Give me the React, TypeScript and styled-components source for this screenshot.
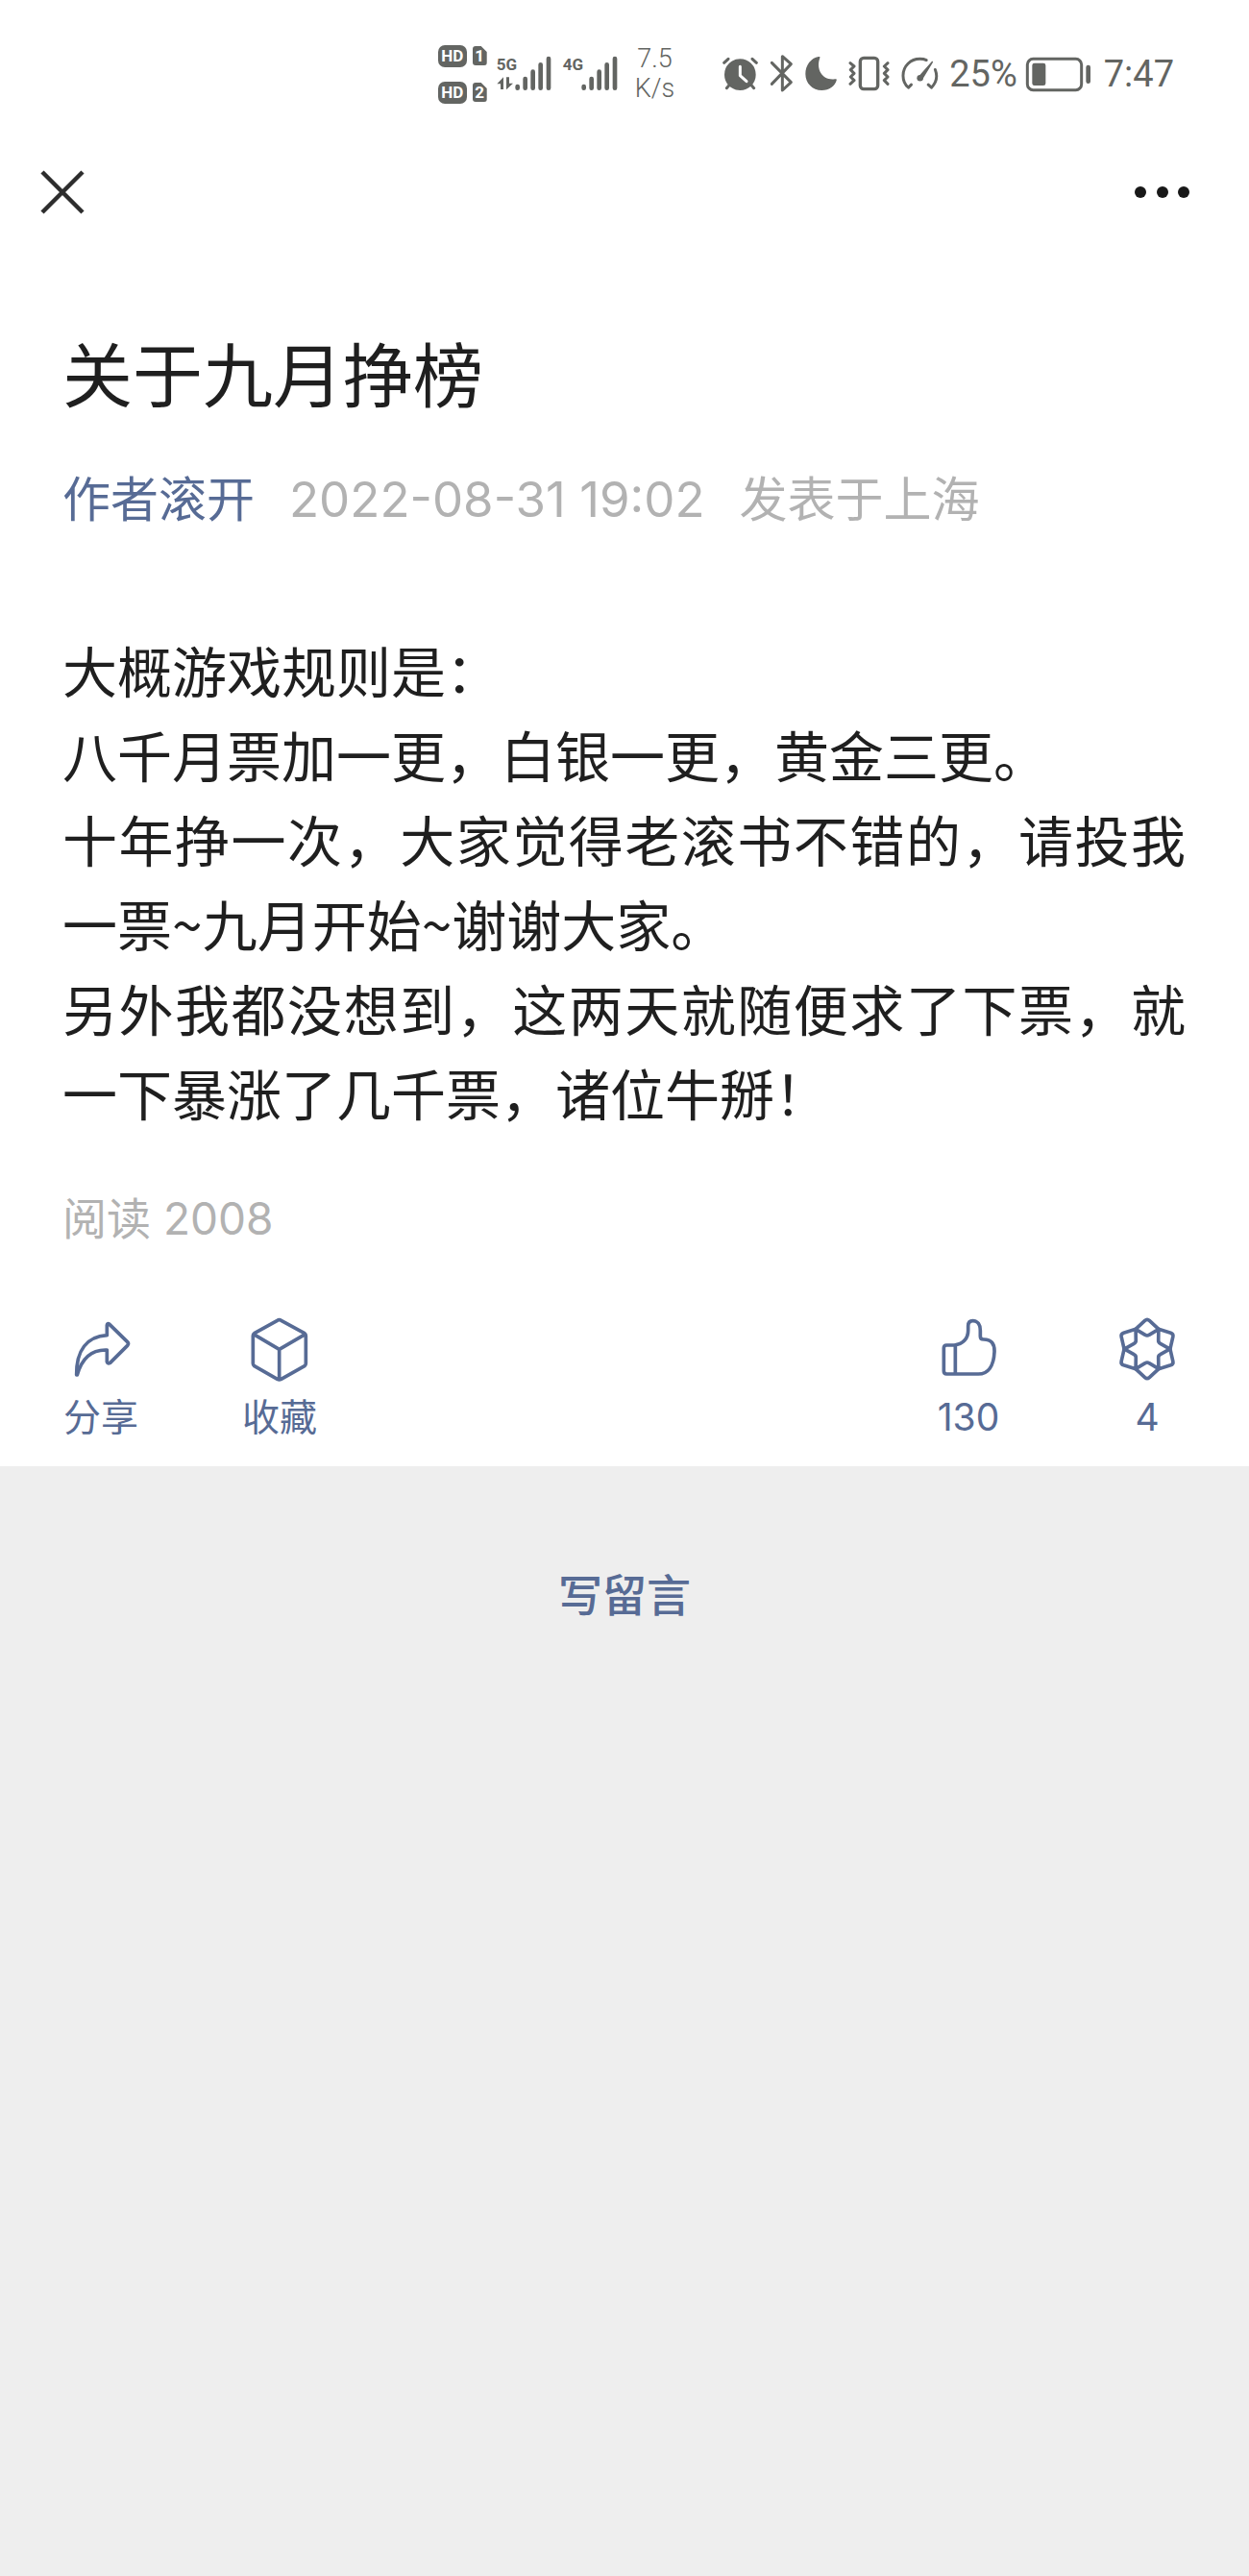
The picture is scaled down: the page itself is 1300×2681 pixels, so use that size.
import React from "react";
import styled, { createGlobalStyle } from "styled-components";

const ink = "#1f1f1f";
const link = "#576b95";
const muted = "#b2b2b2";
const status = "#636562";

const GlobalStyle = createGlobalStyle`
  * { box-sizing: border-box; }
  body {
    margin: 0;
    background: #eeeeee;
    font-family: Inter, "Noto Sans CJK SC", sans-serif;
    color: ${ink};
  }
  h1, p { margin: 0; }
  button {
    padding: 0;
    border: 0;
    background: none;
    font: inherit;
    color: inherit;
    cursor: pointer;
  }
  svg { display: block; flex: none; }
`;

const Sheet = styled.div`
  background: #ffffff;
`;

const StatusBar = styled.header`
  display: flex;
  align-items: center;
  justify-content: flex-end;
  height: 154px;
  padding-right: 78px;
  color: ${status};
  font-family: Roboto, sans-serif;
`;

const Cluster = styled.div<{ $gap: number; $after: number }>`
  display: flex;
  align-items: center;
  gap: ${(p) => p.$gap}px;
  margin-right: ${(p) => p.$after}px;
`;

const SimList = styled.div`
  display: flex;
  flex-direction: column;
  gap: 15px;
`;

const SimRow = styled.div`
  display: flex;
  align-items: center;
  gap: 6px;
`;

const Badge = styled.span<{ $sim?: boolean }>`
  display: flex;
  align-items: center;
  justify-content: center;
  width: ${(p) => (p.$sim ? 15 : 30)}px;
  height: ${(p) => (p.$sim ? 20 : 23)}px;
  border-radius: ${(p) => (p.$sim ? 3 : 7)}px;
  clip-path: ${(p) => (p.$sim ? "polygon(0 0, 60% 0, 100% 30%, 100% 100%, 0 100%)" : "none")};
  background: ${status};
  color: #ffffff;
  font-size: 17px;
  line-height: 20px;
  font-weight: 700;
`;

const Network = styled.div`
  display: flex;
`;

const NetworkType = styled.div`
  display: flex;
  flex-direction: column;
  justify-content: space-between;
  width: 19px;
  height: 40px;
  padding: 1px 0 3px;
  font-size: 17px;
  line-height: 18px;
  font-weight: 700;
`;

const Speed = styled.div`
  font-size: 27px;
  line-height: 31px;
  font-weight: 300;
  text-align: center;
`;

const StatusText = styled.span`
  font-size: 38px;
  line-height: 40px;
`;

const NavBar = styled.nav`
  display: flex;
  align-items: center;
  justify-content: space-between;
  height: 92px;
  padding: 0 55px 0 36px;
`;

const Article = styled.article`
  padding: 92px 66px 0 65px;
`;

const Title = styled.h1`
  font-size: 73px;
  line-height: 108px;
  font-weight: 400;
`;

const Meta = styled.div`
  display: flex;
  flex-wrap: wrap;
  gap: 36px;
  margin-top: 34px;
  color: ${muted};
  font-size: 50px;
  line-height: 80px;
`;

const AuthorLink = styled.a`
  color: ${link};
  text-decoration: none;
`;

const PublishTime = styled.time`
  font-size: 51px;
`;

const Content = styled.div`
  margin-top: 92px;
  font-family: "Noto Sans CJK SC", sans-serif;
  font-size: 57px;
  line-height: 88px;
  text-align: justify;
`;

const ReadCount = styled.p`
  margin-top: 48px;
  color: ${muted};
  font-size: 46px;
  line-height: 80px;
`;

const Actions = styled.div`
  display: flex;
  justify-content: space-between;
  margin-top: 56px;
  padding-bottom: 20px;
`;

const ActionGroup = styled.div`
  display: flex;
  gap: 106px;
`;

const Action = styled.button`
  display: flex;
  flex-direction: column;
  align-items: center;
  width: 80px;
  color: ${link};
  font-size: 39px;
  line-height: 62px;
`;

const Comments = styled.footer`
  display: flex;
  justify-content: center;
  padding: 94px 66px;
`;

const CommentButton = styled.button`
  color: ${link};
  font-size: 46px;
  line-height: 80px;
  font-weight: 500;
`;

const Stroked = styled.svg<{ $w: number }>`
  fill: none;
  stroke: currentColor;
  stroke-width: ${(p) => p.$w}px;
  stroke-linecap: round;
  stroke-linejoin: round;
`;

const SignalBars = () => (
  <Stroked $w={14} width="40" height="40" viewBox="285 78 120 120" aria-hidden>
    <path d="M293 177V182M317 153V182M341 131V182M365 109V182M390 90V182" />
  </Stroked>
);

const DataArrows = () => (
  <svg width="18" height="14" viewBox="228 150 54 42" fill="currentColor" aria-hidden>
    <path d="M249 151V189H240V172H229ZM258 151H267V170H279L258 190Z" />
  </svg>
);

const AlarmIcon = () => (
  <Stroked $w={9} width="37" height="40" viewBox="66 78 111 120" aria-hidden>
    <circle cx="121" cy="140" r="49" fill="currentColor" stroke="none" />
    <path d="M71 103L84 91M159 91L172 103M88 172L79 182M155 172L164 182" />
    <path d="M121 115V143L141 161" stroke="#ffffff" />
  </Stroked>
);

const BluetoothIcon = () => (
  <Stroked $w={9} width="25" height="40" viewBox="212 78 75 120" aria-hidden>
    <path d="M219 103L279 164L252 189V83L279 107L219 169" />
  </Stroked>
);

const MoonIcon = () => (
  <svg width="33" height="40" viewBox="324 78 99 120" fill="currentColor" aria-hidden>
    <path d="M366 84C342 88 325 111 325 138C325 167 347 189 376 189C400 189 417 175 422 158C423 154 421 153 417 154C381 160 356 126 370 88C371 85 370 83 366 84Z" />
  </svg>
);

const VibrateIcon = () => (
  <Stroked $w={9} width="43" height="40" viewBox="460 78 129 120" aria-hidden>
    <rect x="497" y="88" width="55" height="97" rx="11" strokeWidth="10" />
    <path d="M466 104L478 114L467 125L478 136L467 147L478 158L466 169" />
    <path d="M583 104L572 114L583 125L572 136L583 147L572 158L583 169" />
  </Stroked>
);

const GaugeIcon = () => (
  <Stroked $w={9} width="39" height="40" viewBox="625 78 119 120" aria-hidden>
    <path d="M657 172L648 181C637 172 631 158 631 143C631 113 655 90 684 90C692 90 699 91 705 94" />
    <path d="M733 124C741 145 736 166 721 181L711 172" />
    <circle cx="685" cy="151" r="10" fill="currentColor" stroke="none" />
    <path d="M681 145L722 98C725 97 727 99 725 102L692 156Z" fill="currentColor" stroke="none" />
  </Stroked>
);

const BatteryIcon = () => (
  <svg width="69" height="40" viewBox="260 78 207 120" fill="currentColor" role="img" aria-label="电量 25%">
    <rect x="267" y="91" width="169" height="97" rx="18" fill="none" stroke="currentColor" strokeWidth="9" />
    <rect x="282" y="104" width="42" height="70" rx="7" />
    <rect x="450" y="110" width="14" height="58" rx="7" />
  </svg>
);

const CloseIcon = () => (
  <svg width="58" height="58" viewBox="0 0 58 58" fill="none" stroke="#2d2d2d" strokeWidth="4.5" aria-hidden>
    <path d="M8 8L50 50M50 8L8 50" />
  </svg>
);

const MoreIcon = () => (
  <svg width="70" height="40" viewBox="0 0 70 40" fill="#181818" aria-hidden>
    <circle cx="12" cy="20" r="6" />
    <circle cx="35" cy="20" r="6" />
    <circle cx="57" cy="20" r="6" />
  </svg>
);

const ShareIcon = () => (
  <Stroked $w={11} width="80" height="80" viewBox="78 39 240 240" aria-hidden>
    <path d="M122 240C121 164 154 120 217 116V85Q218 77 225 82L281 137Q286 142 281 148L227 202Q219 206 217 199V162C172 160 140 184 124 240Z" />
  </Stroked>
);

const CubeIcon = () => (
  <Stroked $w={11} width="80" height="80" viewBox="636 39 240 240" aria-hidden>
    <path d="M749 70Q755 66 761 70L834 110Q838 113 838 118V204Q838 209 834 212L761 253Q755 256 749 253L677 212Q673 209 673 204V118Q673 113 677 110ZM675 113L755 160L836 113M755 160V253" />
  </Stroked>
);

const ThumbIcon = () => (
  <Stroked $w={11} width="80" height="80" viewBox="84 39 240 240" aria-hidden>
    <path d="M136 147H160C187 144 203 126 203 101V87Q203 71 218 71C233 71 241 83 241 101V119Q241 129 252 129C275 129 286 142 285 168C283 213 265 237 235 237H136Q127 237 127 228V156Q127 147 136 147ZM163 148V236" />
  </Stroked>
);

const StarIcon = () => (
  <Stroked $w={11} width="80" height="80" viewBox="642 39 240 240" aria-hidden>
    {[0, 60, 120, 180, 240, 300].map((angle) => (
      <path
        key={angle}
        transform={`rotate(${angle} 762 159)`}
        d="M726 97L755 70Q762 64 769 70L798 97L768 115Q762 119 756 115Z"
      />
    ))}
  </Stroked>
);

const paragraphs = [
  "大概游戏规则是：",
  "八千月票加一更，白银一更，黄金三更。",
  "十年挣一次，大家觉得老滚书不错的，请投我一票~九月开始~谢谢大家。",
  "另外我都没想到，这两天就随便求了下票，就一下暴涨了几千票，诸位牛掰！",
];

export default function App() {
  return (
    <div lang="zh-CN">
      <GlobalStyle />
      <Sheet>
        <StatusBar>
          <Cluster $gap={10} $after={16}>
            <SimList>
              {[1, 2].map((sim) => (
                <SimRow key={sim}>
                  <Badge>HD</Badge>
                  <Badge $sim>{sim}</Badge>
                </SimRow>
              ))}
            </SimList>
            <Network>
              <NetworkType>
                5G
                <DataArrows />
              </NetworkType>
              <SignalBars />
            </Network>
            <Network>
              <NetworkType>4G</NetworkType>
              <SignalBars />
            </Network>
          </Cluster>
          <Cluster $gap={0} $after={50}>
            <Speed>
              7.5
              <br />
              K/s
            </Speed>
          </Cluster>
          <Cluster $gap={12} $after={11}>
            <AlarmIcon />
            <BluetoothIcon />
            <MoonIcon />
            <VibrateIcon />
            <GaugeIcon />
          </Cluster>
          <Cluster $gap={8} $after={13}>
            <StatusText>25%</StatusText>
            <BatteryIcon />
          </Cluster>
          <StatusText>7:47</StatusText>
        </StatusBar>
        <NavBar>
          <button type="button" aria-label="关闭">
            <CloseIcon />
          </button>
          <button type="button" aria-label="更多">
            <MoreIcon />
          </button>
        </NavBar>
        <Article>
          <Title>关于九月挣榜</Title>
          <Meta>
            <AuthorLink href="#author">作者滚开</AuthorLink>
            <PublishTime dateTime="2022-08-31T19:02">2022-08-31 19:02</PublishTime>
            <span>发表于上海</span>
          </Meta>
          <Content>
            {paragraphs.map((text) => (
              <p key={text}>{text}</p>
            ))}
          </Content>
          <ReadCount>阅读 2008</ReadCount>
          <Actions>
            <ActionGroup>
              <Action type="button">
                <ShareIcon />
                分享
              </Action>
              <Action type="button">
                <CubeIcon />
                收藏
              </Action>
            </ActionGroup>
            <ActionGroup>
              <Action type="button">
                <ThumbIcon />
                130
              </Action>
              <Action type="button">
                <StarIcon />4
              </Action>
            </ActionGroup>
          </Actions>
        </Article>
      </Sheet>
      <Comments>
        <CommentButton type="button">写留言</CommentButton>
      </Comments>
    </div>
  );
}
